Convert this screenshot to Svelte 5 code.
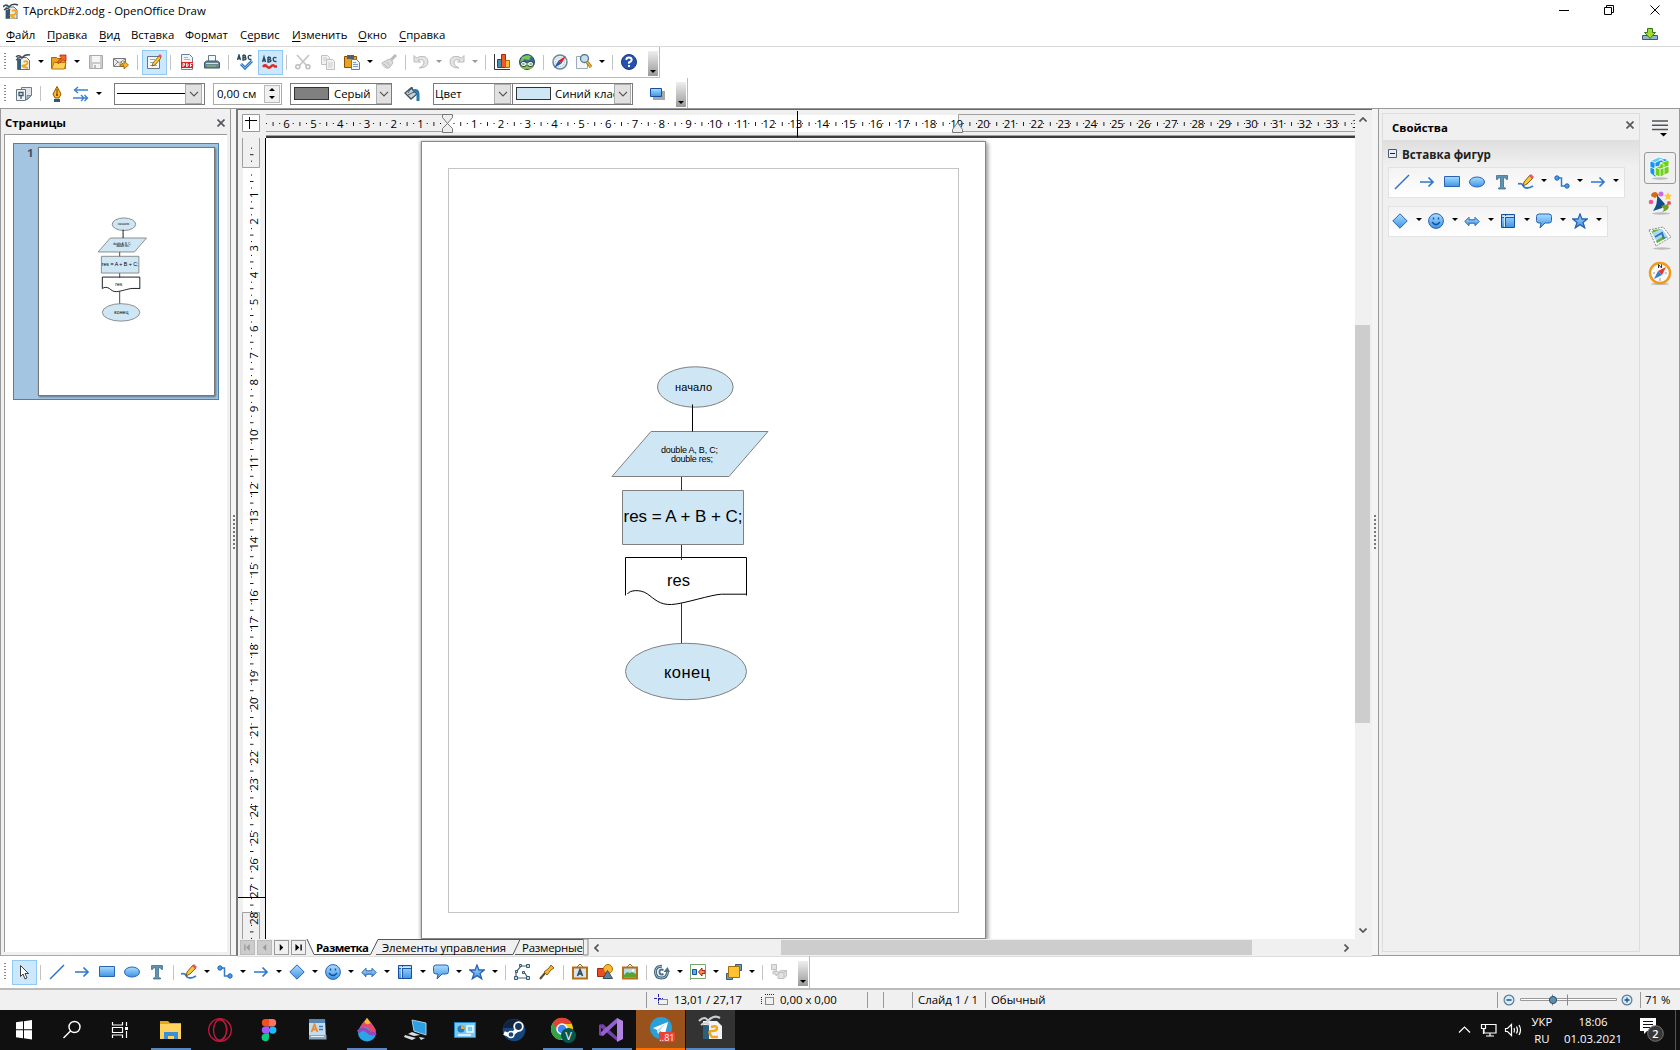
<script>
  const B = 'fill="url(#blue)" stroke="#2a62b4"';
  const icons = {
    app: '<path d="M3 4h8l3 3v9H3z" fill="#e9edf2" stroke="#5f7488"/><path d="M3 7h4v8.500H3z" fill="#33556e"/><path d="M0 4q3-4 6 0q3-4 9-2M1 7q3-3 6 0" fill="none" stroke="#3b4650" stroke-width="1.5"/><path d="M9 8q4-2 4 1t-4 3t3 3" fill="none" stroke="#f0a91c" stroke-width="2"/>',
    fresh: '<path d="M2.500 3.500h9l3 3v9h-12z" fill="#eef1f4" stroke="#55707f"/><path d="M3 6h3v9.500H3z" fill="#2f607c"/><path d="M1 3q3-3 6 1q3-4 8-3M1 6q3-2 5 0" fill="none" stroke="#424b52" stroke-width="1.400"/><path d="M8.500 8q4-2 4 .5t-4 3 4.500 2.500" fill="none" stroke="#eda51c" stroke-width="1.800"/>',
    open: '<path d="M.5 3.500h5l1 1h8v10H.5z" fill="#e8a31f" stroke="#a8620c"/><path d="M3 8.500h12l-1.500 6.500H.8z" fill="#ffd255" stroke="#b87612"/><path d="M6 8.500l4.500-4.500L9 2.500V1h6v6h-1.500L12 5.500 8 9.500z" fill="#f26a26" stroke="#9e2e0c" stroke-width=".8"/>',
    save: '<path d="M1.500 1.500h13v13h-13z" fill="#ccc" stroke="#aaa"/><path d="M4 2h8v6H4zM5 10h7v4H5z" fill="#f5f5f5"/><path d="M6 11h2v3H6z" fill="#bbb"/>',
    mail: '<path d="M.5 4.500h12v8H.5z" fill="#eee" stroke="#777"/><path d="M1 5l5.500 4L12 5M1 12l4-4M12 12L8 8" fill="none" stroke="#888"/><path d="M7 10h4V7l4.500 4-4.500 4v-3H7z" fill="#f7b52a" stroke="#9b6008" stroke-width=".8"/>',
    edit: '<path d="M1.500 2.500h12v12h-12z" fill="#f6f8fa" stroke="#657684"/><path d="M4 5.500h5M4 8.500h3M4 11.500h7" stroke="#9ba8b2"/><path d="M7 9l6-7 2 2-6 7-3 1z" fill="#ffc72e" stroke="#705316" stroke-width=".8"/><path d="M12 2l2-2 2 2-1 2z" fill="#e4576b"/>',
    pdf: '<path d="M2.500.5h8l3 3v12h-11z" fill="#eff3f8" stroke="#6e8194"/><path d="M5 3.500h4M5 5.500h6" stroke="#a8b5c2"/><path d="M2 8h12v6H2z" fill="#df2020"/><path d="M4 13V9.500h1.500v1.800H4M7.500 9.500V12.500q1.800 0 1.800-1.500T7.500 9.500M11.500 13V9.500h2M11.500 11.500h1.500" stroke="#fff" fill="none" stroke-width=".9"/>',
    print: '<path d="M4.500 1.500h7v7h-7z" fill="#f4fafc" stroke="#677c87"/><path d="M.5 8.500l2-1.500h11l2 1.500v5.500H.5z" fill="#6b8694" stroke="#3f5460"/><path d="M2 9.500h12" stroke="#d5e1e7"/><path d="M3 12h9" stroke="#87cf4c"/>',
    spell: '<path d="M.5 6L2 1l1.500 5M1 4.500h2M6 1v5q3 .2 3-1.500 0-1-3-1 2.500 0 2.500-1.200Q8.500 1 6 1M14.500 2Q12 .5 11.300 2.500q-.4 3.500 3.200 3" fill="none" stroke="#2f4a5d" stroke-width="1.400"/><path d="M4 10l4 4 7-7" fill="none" stroke="#2f78c4" stroke-width="3"/><path d="M4 10l4 4 7-7" fill="none" stroke="#7cbcf1"/>',
    spellauto: '<path d="M.5 8L2 3l1.500 5M1 6.500h2M6 3v5q3 .2 3-1.500 0-1-3-1 2.500 0 2.500-1.200Q8.500 3 6 3M14.500 4Q12 2.500 11.300 4.500q-.4 3.500 3.200 3" fill="none" stroke="#2f4a5d" stroke-width="1.400"/><path d="M1 13q2-3 4-.5t4 0t4 0l2 0" fill="none" stroke="#dc2c24" stroke-width="2.600"/>',
    cut: '<path d="M2 1l10 11M14 1L4 12" stroke="#c5c5c5" stroke-width="1.700"/><g fill="none" stroke="#bcbcbc" stroke-width="1.500"><circle cx="2.800" cy="12.700" r="2"/><circle cx="13" cy="12.700" r="2"/></g>',
    copy: '<g fill="#f1f1f1" stroke="#c1c1c1"><path d="M1.500 1.500h6l2 2v7h-8z"/><path d="M6.500 5.500h6l2 2v8h-8z"/></g><path d="M3 4h4M3 6h3M8 9h5M8 11h5M8 13h4" stroke="#ccc"/>',
    paste: '<path d="M.5 2.500h12v11H.5z" fill="#e8a31f" stroke="#8a4f0b"/><path d="M3 1h7v4H3z" fill="#4d626e"/><path d="M7.500 5.500h5l3 3v7h-8z" fill="#eef5fc" stroke="#5d7fa3"/><path d="M9 8.500h3M9 10.500h5M9 12.500h5" stroke="#7d9fc4"/>',
    brush: '<path d="M10 6l5-5" stroke="#bbb" stroke-width="3"/><path d="M1 9l5-3 4-1 2 4-4 5q-5 1-7-5z" fill="#ddd" stroke="#bbb"/><path d="M3 10l4 4M5.500 8l4 4" stroke="#bbb"/>',
    undo: '<path d="M1 1.500V8h6.500L5 6q6-1.500 6 3 0 3-5 5 9 0 9-6 0-6.500-8-5.500L3.500 4z" fill="#e3e3e3" stroke="#bdbdbd"/>',
    redo: '<path d="M15 1.500V8H8.500L11 6Q5 4.500 5 9q0 3 5 5-9 0-9-6 0-6.500 8-5.500L12.500 4z" fill="#e3e3e3" stroke="#bdbdbd"/>',
    chart: '<path d="M.5 0v15.500H16" fill="none" stroke="#333"/><path d="M3.500 5.500h4v8h-4z" fill="#4b8ba9" stroke="#245067"/><path d="M7.500.5h4v13h-4z" fill="#f05a28" stroke="#a42708"/><path d="M11.500 6.500h4v7h-4z" fill="#f8bd3a" stroke="#a76800"/>',
    globe: '<circle cx="8" cy="8" r="7.500" fill="#376d92" stroke="#234b69"/><path d="M3 3q5-3 9-1l-2 4-5-1-2 4-2-1z" fill="#7ac55c"/><path d="M1.500 9h13v4l-3 2h-7l-3-2z" fill="#80bf55"/><g fill="#80bf55" stroke="#39444c" stroke-width="1"><rect x="1.500" y="7.500" width="6" height="5" rx="2.500"/><rect x="8.500" y="7.500" width="6" height="5" rx="2.500"/></g><g fill="none" stroke="#eef"><rect x="2.500" y="8.500" width="4" height="3" rx="1.500"/><rect x="9.500" y="8.500" width="4" height="3" rx="1.500"/><path d="M5 10h6"/></g>',
    compass: '<circle cx="8" cy="8" r="7" fill="#e8f1f6" stroke="#6b8795" stroke-width="1.500"/><circle cx="8" cy="8" r="4.500" fill="none" stroke="#a4bac5" stroke-dasharray="1 1"/><path d="M6.500 6.500L14 2 9.500 9.500z" fill="#e6202a"/><path d="M6.500 6.500L2 14l7.500-4.500z" fill="#245ea9"/>',
    find: '<path d="M.5 2.500h11v12H.5z" fill="#f4f7fa" stroke="#9daab5"/><circle cx="8.500" cy="4.500" r="4" fill="#c2dff0" stroke="#597487" stroke-width="1.300"/><path d="M11 8l4 5" stroke="#9b640c" stroke-width="3"/><path d="M11 8l4 5" stroke="#f3b936" stroke-width="1.500"/>',
    help: '<circle cx="8" cy="8" r="7.500" fill="#2550ad" stroke="#193980"/><path d="M5.300 6q0-2.500 2.700-2.500T10.700 6Q10.500 7.500 8 8.500v1.200M8 11v2" fill="none" stroke="#fff" stroke-width="1.900"/>',
    styles: '<path d="M5.500 1.500h10v8l-4 4h-6z" fill="#dfe7ec" stroke="#6b7c87"/><path d="M15 9.500l-4 4v-4z" fill="#a8c9db" stroke="#657986" stroke-width=".8"/><path d="M.5 3.500h9v11h-9z" fill="#eff3f6" stroke="#657986"/><path d="M3 6.500h4v3H3zM5 9.500V13" fill="none" stroke="#425765" stroke-width="1.300"/>',
    pen: '<path d="M8 .5L4 8l2 4h4l2-4z" fill="#f9bd2c" stroke="#935207"/><path d="M8 3v6" stroke="#6b3a08"/><circle cx="8" cy="9" r="1" fill="#6b3a08"/><path d="M5 13h6v3H5z" fill="#29597d"/>',
    lineends: '<path d="M1.500 4H15M5 1L1.500 4 5 7M0 12h14M8 9l3 3-3 3M11.500 9l3 3-3 3" fill="none" stroke="#3b82d3" stroke-width="1.400"/>',
    bucket: '<path d="M1 7l6-5 6 6-6 5z" fill="#c7d1d8" stroke="#45535e" stroke-width="1.300"/><path d="M4 7l4-6 2 6M4 9l6-3" fill="none" stroke="#45535e"/><path d="M9 5q5-2 5 3v7" fill="none" stroke="#2779b5" stroke-width="3"/>',
    shadow: '<path d="M4 5h12v9H4z" fill="#a7a7a7"/><path d="M1.500 2.500h11v8h-11z" fill="url(#blue)" stroke="#174f9f"/>',
    cursor: '<path d="M4.500 1.500v11l2.500-2.500 2 5 2-1-2-4.500h3.500z" fill="#fff" stroke="#3c3c3c"/>',
    line: '<path d="M1 15L15 1" stroke="#2a70c8" stroke-width="1.500"/>',
    arrow: '<path d="M1 8h13M9.500 3.500L14 8l-4.500 4.500" fill="none" stroke="#2d78d0" stroke-width="1.700"/>',
    rect: `<path d="M.5 2.500h15v10H.5z" ${B}/>`,
    ellipse: `<ellipse cx="8" cy="8" rx="7.500" ry="5" ${B}/>`,
    text: '<path d="M2.500 1.500h11v4h-1q-.5-2-3-2v9.500q0 1 2 1v1h-7v-1q2 0 2-1V3.500q-2.500 0-3 2h-1z" fill="#5f93b4" stroke="#35637f" stroke-width=".7"/>',
    pencil: '<path d="M0 10q4-1 5 1.500t4 2.500 6-2" fill="none" stroke="#347bd0" stroke-width="1.800"/><path d="M6 8l6-7 3 3-6 6-4 2z" fill="#ffc72e" stroke="#6e4e18" stroke-width=".9"/><path d="M11 2l2-2 3 3-2 2z" fill="#e4596a"/>',
    connector: '<path d="M3 4h4.500v8H13" fill="none" stroke="#347bd0" stroke-width="1.500"/><circle cx="3" cy="4" r="2.200" fill="#4b9ae9" stroke="#2263b9"/><circle cx="13" cy="12" r="2.200" fill="#4b9ae9" stroke="#2263b9"/>',
    diamond: `<path d="M8 .8L15.200 8 8 15.200.8 8z" ${B}/>`,
    smile: `<circle cx="8" cy="8" r="7.400" ${B}/><path d="M4 9q4 5 8 0M5.500 4.500v2M10.500 4.500v2" fill="none" stroke="#174f9f" stroke-width="1.400"/>`,
    both: `<path d="M.8 8.500L5 4.300v2.500h6V4.300l4.200 4.200-4.200 4.200v-2.500H5v2.500z" ${B}/>`,
    flow: `<path d="M1.500 1.500h13v13h-13z" fill="url(#blue)" stroke="#174f9f"/><path d="M2 4.500h12M5.500 2v12" stroke="#2357a5"/><path d="M2 3.500h12M4.500 2v12" stroke="#c9e8ff"/>`,
    callout: `<path d="M3 1h10q2.500 0 2.500 2.500v4Q15.500 10 13 10H9l-5 5 1-5H3Q.5 10 .5 7.500v-4Q.5 1 3 1z" ${B}/>`,
    star: `<path d="M8 1l1.900 5h5.300l-4.200 3.500 1.700 5.300L8 11.600l-4.700 3.200L5 9.500.8 6h5.300z" ${B} stroke-width="1.300"/>`,
    points: '<path d="M14 2H7L2 8v6h12l-4-6" fill="none" stroke="#45647a" stroke-width="1.200"/><g fill="#b6daf2" stroke="#375a76"><path d="M5.500.5h2v2h-2zM.5 12.500h3v3h-3zM12.500 12.500h3v3h-3zM12.500.5h3v3h-3zM1.500 6.500h2v2h-2zM8.500 7.500h2v2h-2z"/></g>',
    gluepoint: '<path d="M1 15l5-6" stroke="#56483d" stroke-width="2"/><path d="M5 8l5-4 2-3 3 3-3 2-4 5z" fill="#f3b32f" stroke="#91600c"/>',
    fontwork: '<path d="M5 3l3-3 3 3" fill="none" stroke="#8b6730"/><path d="M1 3.500h14v11H1z" fill="#d9e5ed" stroke="#b86f13" stroke-width="2"/><path d="M5.500 12L8 5.500l2.500 6.500M6.500 9.800h3" fill="none" stroke="#344b5b" stroke-width="1.700"/>',
    gallery: '<path d="M.5 4.500h8v8h-8z" fill="#e94d20" stroke="#9e2b0b"/><circle cx="11" cy="5" r="4.500" fill="#f9b730" stroke="#ae6e0b"/><path d="M6 14.500l4.500-8 5 8z" fill="#5f8298" stroke="#2f4d61"/>',
    picture: '<path d="M5 3l3-3 3 3" fill="none" stroke="#8b6730"/><path d="M1 3.500h14v11H1z" fill="#b2dcf5" stroke="#b86f13" stroke-width="2"/><path d="M2 11l3-3 3 1 2-1 4 2v3.500H2z" fill="#57a52f"/><circle cx="11" cy="6.500" r="1.200" fill="#fff"/>',
    rotate: '<path d="M8 2.200Q1.500 2 1.500 8t6 6q5.500 0 6-6" fill="none" stroke="#3f647b" stroke-width="3"/><path d="M8 2.200Q1.500 2 1.500 8t6 6q5.500 0 6-6" fill="none" stroke="#9cc0d6"/><path d="M9.500 6Q5 4.500 5.500 8.500q.5 3 4 1.500" fill="none" stroke="#4d7188" stroke-width="2"/><path d="M9.500 8l4-5 2.500 5z" fill="#4d7188"/>',
    align: '<path d="M.5 0v16M.5.500h15v14H.5" fill="none" stroke="#77a96d"/><path d="M2.500 5.500h4v5h-4z" fill="#58adeb" stroke="#174f9f"/><path d="M15 6.500h-3V4L8.500 8l3.500 4V9.500h3z" fill="#f48d5e" stroke="#a42809"/>',
    arrange: '<path d="M9.500.5h6v6h-6z" fill="#6e9cbd" stroke="#335a78"/><path d="M.5 9.500h6v6h-6z" fill="#6e9cbd" stroke="#335a78"/><path d="M2.500 2.500h11v11h-11z" fill="#ffc332" stroke="#a46b0b"/>',
    extrude: '<g fill="#e2e2e2" stroke="#c0c0c0"><path d="M.5.5h5v5h-5zM7 8.500l3-2h5.500V12L13 14.500H7zM7 8.500h6V14M13 8.500l2.500-2"/><path d="M2 7v3h3v2l3-3-3-3v2H4V7z"/></g>',
  };
  const T = (icon, o = {}) => ({ icon, ...o });
  const SEP = { sep: true };
  const standard = [T('fresh', { drop: 1 }), T('open', { drop: 1 }), T('save'), T('mail'), SEP, T('edit', { on: 1 }), SEP, T('pdf'), T('print'), SEP, T('spell'), T('spellauto', { on: 1 }), SEP, T('cut'), T('copy'), T('paste', { drop: 1 }), T('brush'), SEP, T('undo', { drop: 1, off: 1 }), T('redo', { drop: 1, off: 1 }), SEP, T('chart'), T('globe'), SEP, T('compass'), T('find', { drop: 1 }), SEP, T('help')];
  const basic = ['line', 'arrow', 'rect', 'ellipse', 'text'].map((n) => T(n));
  const lines = ['pencil', 'connector', 'arrow'].map((n) => T(n, { drop: 1 }));
  const shapes = ['diamond', 'smile', 'both', 'flow', 'callout', 'star'].map((n) => T(n, { drop: 1 }));
  const drawing = [T('cursor', { on: 1 }), SEP, ...basic, SEP, ...lines, ...shapes, SEP, T('points'), T('gluepoint'), SEP, T('fontwork'), T('gallery'), T('picture'), SEP, T('rotate', { drop: 1 }), T('align', { drop: 1 }), T('arrange', { drop: 1 }), SEP, T('extrude')];
  const menus = [['', 'Ф', 'айл'], ['', 'П', 'равка'], ['', 'В', 'ид'], ['Вст', 'а', 'вка'], ['Фо', 'р', 'мат'], ['С', 'е', 'рвис'], ['', 'И', 'зменить'], ['', 'О', 'кно'], ['', 'С', 'правка']];
  const CM = 26.8;
  const hMarks = Array.from({ length: 42 }, (_, i) => i - 7);
  const vMarks = Array.from({ length: 30 }, (_, i) => i - 1);

  const tasks = {
    start: '<path d="M6 6.300l7-1v8H6zM14 5.200l8-1.200v9.300h-8zM6 14.200h7v8l-7-1zM14 14.200h8v9.300l-8-1.200z" fill="#fff"/>',
    search: '<circle cx="16.500" cy="11" r="5.500" fill="none" stroke="#fff" stroke-width="1.400"/><path d="M12.500 15l-7 7" stroke="#fff" stroke-width="1.400"/>',
    view: '<path d="M6.500 6v3h10V6M6.500 22v-3h10v3M6.500 11.500h10v5h-10zM20.500 6v4M20.500 15v7" fill="none" stroke="#fff" stroke-width="1.200"/><path d="M19 11h3v3h-3z" fill="#fff"/>',
    explorer: '<path d="M3 5h8l2 2h11v16H3z" fill="#e5a714"/><path d="M3 8h21v15H3z" fill="#ffd35d"/><path d="M7 23v-7h14v7h-4v-3h-6v3z" fill="#3a8fd9"/>',
    opera: '<circle cx="14" cy="14" r="11.300" fill="none" stroke="#c4183f" stroke-width="1.300"/><ellipse cx="14" cy="14" rx="6.500" ry="10.500" fill="none" stroke="#c4183f" stroke-width="1.300"/><path d="M12 3q10 3 9 11t-9 11" fill="none" stroke="#c4183f"/>',
    figma: '<path d="M14 3h-3.500a3.700 3.700 0 000 7.400H14z" fill="#f24e1e"/><path d="M14 3h3.500a3.700 3.700 0 010 7.400H14z" fill="#ff7262"/><path d="M14 10.400h-3.500a3.700 3.700 0 000 7.400H14z" fill="#a259ff"/><circle cx="17.700" cy="14.100" r="3.700" fill="#1abcfe"/><path d="M14 17.800h-3.500a3.700 3.700 0 103.500 3.700z" fill="#0acf83"/>',
    word: '<path d="M5 3h16l1 20H5z" fill="#c3dcf0"/><path d="M5 3h16v4H5z" fill="#5289b9"/><path d="M7.500 16l3-7.500 3 7.500M8.500 13.500h4" fill="none" stroke="#f08a24" stroke-width="1.800"/><path d="M15 10.500h4M15 13.500h4" stroke="#357cc0" stroke-width="1.500"/><path d="M5 19h17.500v4.500H5z" fill="#8aa7bd"/><path d="M7 20.500h13" stroke="#e8f2fa"/>',
    flame: '<path d="M14 2q9 10 9 15a9 8.500 0 01-18 0Q5 12 14 2z" fill="#28a7e8"/><path d="M14 2q-5 5-8 11 7-5 10 0t7 2Q22 11 14 2z" fill="#e8476c"/><path d="M5 16q5-5 9-1t9 2" fill="none" stroke="#9548bd" stroke-width="3.500"/><path d="M14 2l3.500 5q-4 3-6-1z" fill="#ffc21a"/>',
    remote: '<path d="M10 4l14 3v12l-12-4z" fill="#2c9fe5" stroke="#a4cee8"/><path d="M10 16l8 3-6 1-6-2zM3 19l11 3-4 2-8-3zM17 21l6 1-4 2z" fill="#d8dde1"/>',
    system: '<path d="M3.500 6.500h21v15h-21z" fill="#79c8f4" stroke="#2287c8"/><circle cx="10" cy="13" r="3.500" fill="#257cb6"/><path d="M10 13V9.500A3.500 3.500 0 0113.500 13z" fill="#f2a62b"/><path d="M16 10h6v6h-6zM7 19h13" fill="none" stroke="#eefaff" stroke-width="1.500"/>',
    steam: '<circle cx="14" cy="14" r="11.300" fill="#17467c"/><path d="M3 12a11.300 11.300 0 0122 0z" fill="#11233f"/><path d="M4 17l6 2.500 8-6" fill="none" stroke="#fff" stroke-width="4"/><circle cx="18.500" cy="10.500" r="4.300" fill="#17355f" stroke="#fff" stroke-width="1.800"/><circle cx="11" cy="18.500" r="3" fill="#17467c" stroke="#fff" stroke-width="1.300"/>',
    chrome: '<circle cx="13" cy="13" r="11" fill="#f8c61b"/><path d="M3.500 7.500A11 11 0 0123 8H13l-4.500 7.500z" fill="#e24134"/><path d="M3.500 7.500A11 11 0 0012 24l5-9H9z" fill="#31a350"/><circle cx="13" cy="13" r="5" fill="#4285f4" stroke="#fff" stroke-width="1.500"/><circle cx="19.500" cy="19.500" r="7.500" fill="#06574a"/><text x="19.500" y="23.500" text-anchor="middle" font-size="11" fill="#fff">V</text>',
    vs: '<path d="M2 9l3-1 14 13 0 4L2 11z" fill="#7641ad"/><path d="M2 19l3 1L19 7V2L2 17z" fill="#9462d0"/><path d="M1 9l2-1v12l-2-1z" fill="#7641ad"/><path d="M19 2l6 3v18l-6 3z" fill="#b184e4"/>',
    telegram: '<circle cx="14" cy="13" r="11" fill="#28a0da"/><path d="M6 13l15-6-3 12-5-3-2 3-1-4z" fill="#fff"/><path d="M10 15l8-6-6 8" fill="#b9ddf0"/><rect x="12" y="17" width="16" height="10" rx="2" fill="#ee4036"/><text x="20" y="25.500" text-anchor="middle" font-size="9" fill="#fff">..81</text>',
    draw: '<path d="M6 6h14l5 5v13H6z" fill="#f2f4f6"/><path d="M6 10h6v14H6z" fill="#2d5f7c"/><path d="M2 6q6-6 9 0 6-7 12-3M4 10q5-4 8 0" fill="none" stroke="#c9d0d4" stroke-width="2.200"/><path d="M14 12q6-2 6 1t-5 3 0 6h6" fill="none" stroke="#f1a81e" stroke-width="2.500"/>',
  };
  const taskbar = [['start'], ['search'], ['view'], ['explorer', 'run'], ['opera'], ['figma'], ['word'], ['flame', 'run'], ['remote'], ['system'], ['steam'], ['chrome', 'run'], ['vs', 'run'], ['telegram', 'alert'], ['draw', 'active']];
</script>

{#snippet ico(name)}
  <svg class="ico" viewBox="0 0 16 16">{@html icons[name]}</svg>
{/snippet}

{#snippet tools(list)}
  {#each list as t}
    {#if t.sep}
      <i class="sep"></i>
    {:else}
      <span class="tool" class:on={t.on} class:menued={t.drop}>{@render ico(t.icon)}</span>
      {#if t.drop}<span class="drop" class:off={t.off}></span>{/if}
    {/if}
  {/each}
{/snippet}

{#snippet chevron()}
  <span class="chev"><svg viewBox="0 0 10 6"><path d="M1 .8l4 4 4-4" fill="none" stroke="#555" stroke-width="1.200" /></svg></span>
{/snippet}

{#snippet diagram()}
  <svg class="diagram" viewBox="422 141 563 797" font-family="Liberation Sans, Arial, sans-serif">
    <g fill="#cfe7f5" stroke="#808080">
      <ellipse cx="695.300" cy="387" rx="37.800" ry="20.200" />
      <path d="M651 431.500h117l-39 45H612z" />
      <path d="M622.500 490.500h121v54h-121z" />
      <ellipse cx="686" cy="671.500" rx="60.500" ry="28.200" />
    </g>
    <g fill="none" stroke="#000">
      <path d="M692.500 404.500v27" />
      <path d="M625.500 595.500v-38h121v38M627.500 594c2-4 13-5 20 0s12 11 24 10.500 40-10 50-10.300h25" />
      <path d="M681.500 477v13.500M681.500 545v15M681.500 603v40" stroke="#333" />
    </g>
    <g class="labels" fill="#000">
      <text x="675" y="391" font-size="11" textLength="37">начало</text>
      <text x="661" y="453" font-size="9" textLength="57">double A, B, C;</text>
      <text x="671" y="462" font-size="9" textLength="42">double res;</text>
      <text x="623.500" y="521.500" font-size="17" textLength="119">res = A + B + C;</text>
      <text x="667" y="586" font-size="16.500" textLength="23">res</text>
      <text x="664" y="678" font-size="16.500" textLength="46">конец</text>
    </g>
  </svg>
{/snippet}

<svg width="0" height="0" class="defs">
  <defs>
    <linearGradient id="blue" x1="0" y1="0" x2="0" y2="1">
      <stop offset="0" stop-color="#a9dcff" />
      <stop offset="1" stop-color="#3f94e4" />
    </linearGradient>
  </defs>
</svg>

<div class="window">
  <header class="title">
    {@render ico('app')}
    <span class="name">TAprckD#2.odg - OpenOffice Draw</span>
    <svg class="winbtns" viewBox="0 0 110 12"><path d="M0 6.500h10M45.500 3.500h7v7h-7zM47.500 3.500v-2h7v7h-2M91.500 1.500l9 9M100.500 1.500l-9 9" fill="none" stroke="#000" /></svg>
  </header>
  <nav class="menu">
    {#each menus as [a, u, b]}<span>{a}<u>{u}</u>{b}</span>{/each}
    <svg class="update" viewBox="0 0 16 13"><path d="M.5 7.500h15v4H.5z" fill="#8fb7cf" stroke="#3a5a70" /><path d="M5.500.5h5v4h3L8 10.500 2.500 4.500h3z" fill="#a6d829" stroke="#2d7d14" /></svg>
  </nav>

  <div class="bar std"><i class="grip"></i>{@render tools(standard)}<b class="more"></b></div>

  <div class="bar fmt">
    <i class="grip"></i>
    {@render tools([T('styles'), SEP, T('pen'), T('lineends', { drop: 1 })])}
    <div class="combo ln"><i class="stroke"></i>{@render chevron()}</div>
    <div class="combo num"><span>0,00 см</span><i class="spin"><em class="up"></em><em class="dn"></em></i></div>
    <div class="combo col"><i class="swatch grey"></i><span>Серый</span>{@render chevron()}</div>
    {@render tools([T('bucket', { drop: 0 })])}
    <div class="combo kind"><span>Цвет</span>{@render chevron()}</div>
    <div class="combo fill"><i class="swatch"></i><span>Синий клас</span>{@render chevron()}</div>
    {@render tools([T('shadow')])}
    <b class="more"></b>
  </div>

  <main>
    <aside class="pages">
      <div class="phead"><b>Страницы</b><svg viewBox="0 0 8 8"><path d="M.5.5l7 7M7.500.5l-7 7" stroke="#54585e" stroke-width="1.700" /></svg></div>
      <div class="plist"><div class="thumb"><b>1</b><div class="mini">{@render diagram()}</div></div></div>
    </aside>
    <div class="split"><i></i></div>

    <section class="work">
      <div class="corner"><svg viewBox="0 0 18 18"><path d="M.5.5h17v17H.5z" fill="#fff" stroke="#999" /><path d="M3 6.500h12M7.500 3v12" stroke="#000" /></svg></div>
      <svg class="hruler" viewBox="266 110 1089 28">
        <rect x="266" y="110" width="1089" height="28" fill="#f0f0f0" />
        <rect x="447" y="115" width="511" height="17" fill="#fff" />
        <path d="M260 114.500H447.500V131.500H260M1356 114.500H958.500V131.500H1356" fill="none" stroke="#a0a0a0" />
        <path d="M260 135.500h1100" stroke="#a0a0a0" /><path d="M260 137h1100" stroke="#000" stroke-width="1.600" />
        {#each hMarks as n}
          {@const x = 447.3 + n * CM}
          {#if n !== 0 && n > -7}<text {x} y="127.500" text-anchor="middle">{Math.abs(n)}</text>{/if}
          <path d="M{x + 6.200} 123.500h1M{x + 19.500} 123.500h1" stroke="#000" />
          <path d="M{x + 13.400} 122v4" stroke="#222" />
        {/each}
        <path d="M797.500 111v26" stroke="#000" />
        <g fill="#eee" stroke="#777"><path d="M442.500 114.500h10v3l-5 6-5-6zM442.500 132.500h10v-4l-5-5-5 5zM952.500 132.500h10v-3l-5-7-5 7z" /></g>
      </svg>
      <svg class="vruler" viewBox="238 138 28 801">
        <rect x="238" y="138" width="28" height="801" fill="#f0f0f0" />
        <rect x="243" y="168" width="17" height="744" fill="#fff" />
        <path d="M242.500 137V167.500H259.500V137M242.500 940V912.500H259.500V940" fill="none" stroke="#a0a0a0" />
        <path d="M265.500 137v810" stroke="#000" />
        {#each vMarks as n}
          {@const y = 168 + n * CM}
          {#if n > 0}<text transform="translate(257.800 {y}) rotate(-90)" text-anchor="middle">{n}</text>{/if}
          <path d="M251 {y + 7}h1M251 {y + 20}h1" stroke="#000" />
          <path d="M250 {y + 13.5}h3.500" stroke="#222" />
        {/each}
        <path d="M238 897.500h28" stroke="#000" />
      </svg>
      <div class="canvas"><div class="page">{@render diagram()}</div></div>
      <div class="vscroll">
        <svg viewBox="0 0 8 5"><path d="M.5 4.500L4 1l3.500 3.500" fill="none" stroke="#555" stroke-width="1.700" /></svg>
        <i></i>
        <svg viewBox="0 0 8 5"><path d="M.5.5L4 4 7.500.5" fill="none" stroke="#555" stroke-width="1.700" /></svg>
      </div>
      <div class="bottom">
        <div class="navs">
          <svg class="dis" viewBox="0 0 15 15"><path d="M4.500 4v7" stroke="#999" stroke-width="1.500" /><path d="M10 3.500v8l-4-4z" fill="#999" /></svg>
          <svg class="dis" viewBox="0 0 15 15"><path d="M9.500 3.500v8l-4-4z" fill="#999" /></svg>
          <svg viewBox="0 0 15 15"><path d="M5.500 3.500v8l4-4z" fill="#000" /></svg>
          <svg viewBox="0 0 15 15"><path d="M4 3.500v8l4.500-4z" fill="#000" /><path d="M10.500 4v7" stroke="#000" stroke-width="1.600" /></svg>
        </div>
        <svg class="tabs" viewBox="306 939 284 17">
          <path d="M306 939h284v17H306z" fill="#f0f0f0" />
          <path d="M307 939l7 15.500h56L378 939z" fill="#fff" />
          <path d="M307 939l7 15.500h56.500l7.500-15H588" fill="none" stroke="#555" />
          <path d="M376 954.500h137l7-15M515 954.500h73" fill="none" stroke="#555" />
          <text x="316" y="952" font-weight="700" textLength="53">Разметка</text>
          <text x="382" y="952" textLength="124">Элементы управления</text>
          <text x="522" y="952" textLength="61">Размерные</text>
          <path d="M583.500 939v16h4.500v-16z" fill="#f0f0f0" stroke="#888" />
        </svg>
        <div class="hscroll">
          <svg viewBox="0 0 5 8"><path d="M4.500.5L1 4l3.500 3.500" fill="none" stroke="#555" stroke-width="1.700" /></svg>
          <i></i>
          <svg viewBox="0 0 5 8"><path d="M.5.5L4 4 .5 7.500" fill="none" stroke="#555" stroke-width="1.700" /></svg>
        </div>
      </div>
    </section>
    <div class="split right"><i></i></div>

    <aside class="props">
      <div class="deck">
        <div class="dhead"><b>Свойства</b><svg viewBox="0 0 8 8"><path d="M.5.5l7 7M7.500.5l-7 7" stroke="#54585e" stroke-width="1.700" /></svg></div>
        <div class="dsub"><svg viewBox="0 0 9 9"><path d="M.5.5h8v8h-8z" fill="#e7eef5" stroke="#4c5c6c" /><path d="M2 4.500h5" stroke="#222" /></svg><b>Вставка фигур</b></div>
        <div class="set first">{@render tools([...basic, ...lines])}</div>
        <div class="set second">{@render tools(shapes)}</div>
      </div>
      <div class="dtabs">
        <svg class="burger" viewBox="0 0 18 18"><path d="M1 2h16M1 6.300h16M1 10.500h16" stroke="#4c555e" stroke-width="1.500" /><path d="M9 14h7l-3.500 3.500z" fill="#000" /></svg>
        <span class="dtab sel"><svg viewBox="0 0 24 24"><ellipse cx="12" cy="22.500" rx="8" ry="1.200" fill="#bbb" /><g stroke="#fff" stroke-width=".8"><path d="M2 5l9-4 10 3v5l-10 2v9l-4 1-5-4z" fill="#1695ee" /><path d="M2 5l9-4 5 1.500-9 4z" fill="#68c9ff" /><path d="M12 7l9-3v13l-9 4-5-2v-8l5-1z" fill="#70cf1d" /><path d="M7 11l5 2 9-3M12 13v8M12 7l4 1.500V20M7 6.500V19M2 11l5 2M11 3l5 2" fill="none" /></g></svg></span>
        <span class="dtab"><svg viewBox="0 0 24 24"><ellipse cx="13" cy="22.500" rx="9" ry="1.200" fill="#bbb" /><path d="M3 5q0-4 5-4l3 3-4 3z" fill="#d66a16" /><path d="M9 4l8 9-3 4-9 3q5-7 4-16z" fill="#124f88" /><path d="M13 15l7-2q3 6-6 8 4-3-1-6z" fill="#71a02a" /><g fill="#ef5a8e"><circle cx="3" cy="11" r="2.300" /><circle cx="13" cy="3" r="2.500" fill="#c96be8" /><circle cx="21" cy="12" r="2" fill="#ee5548" /></g><path d="M20 1l1 2.500 3 .5-2 2 .5 3L20 7.500 17.500 9l.5-3-2-2 3-.5z" fill="#ffc936" /></svg></span>
        <span class="dtab"><svg viewBox="0 0 24 24"><ellipse cx="14" cy="22.500" rx="9" ry="1.200" fill="#bbb" /><path d="M1 4l14-3 8 10-15 9z" fill="#fff" stroke="#888" stroke-dasharray="2 1" /><path d="M3 5l11-2 6 8-11 6z" fill="#a9daf3" /><path d="M4 7l9-4-8 1zM8 15l6-4 6 0-11 6z" fill="#6bb32c" /><path d="M7 11l7-4 2 6" fill="none" stroke="#3675bb" stroke-width="2" /></svg></span>
        <span class="dtab"><svg viewBox="0 0 24 24"><ellipse cx="12" cy="23" rx="9" ry="1" fill="#bbb" /><circle cx="12" cy="12" r="10" fill="#fafafa" stroke="#f09a1a" stroke-width="2.400" /><path d="M12 17v3M5 12h2M17 12h2" stroke="#999" /><path d="M10 10l8-4-4 8z" fill="#e03a31" /><path d="M10 10l4 4-8 4z" fill="#347ed1" /><path d="M10.500 7V3.500l3 3.500V3.500" fill="none" stroke="#333" /></svg></span>
      </div>
    </aside>
  </main>

  <div class="bar drw"><i class="grip"></i>{@render tools(drawing)}<b class="more"></b></div>

  <footer class="status">
    <div class="pos"><svg viewBox="0 0 14 12"><path d="M4.500 0v9M0 4.500h9" stroke="#22a" stroke-dasharray="3 1" /><path d="M4.500 5.500h9v5h-9z" fill="none" stroke="#222" stroke-dasharray="1 1" /></svg><span>13,01 / 27,17</span></div>
    <div class="size"><svg viewBox="0 0 15 12"><path d="M5.500 3.500h8v7h-8zM1.500 3v8M5 .5h9" fill="none" stroke="#222" stroke-dasharray="1 1" /></svg><span>0,00 x 0,00</span></div>
    <div class="gap1"></div><div class="gap2"></div>
    <div class="slide">Слайд 1 / 1</div>
    <div class="style">Обычный</div>
    <div class="zoom"><svg viewBox="0 0 134 14"><g fill="#d6eaf8" stroke="#5a7c98" stroke-width="1.200"><circle cx="8" cy="7" r="4.900" /><circle cx="126" cy="7" r="4.900" /></g><path d="M5.500 7h5M123.500 7h5M126 4.500v5" stroke="#16518b" stroke-width="1.300" /><path d="M19.500 5.500h96v2h-96z" fill="#fff" stroke="#999" /><path d="M66.500 1.500v11M51.500 1.500v11" stroke="#888" /><circle cx="52" cy="7" r="3.600" fill="#5c8eae" stroke="#27506d" /></svg></div>
    <div class="pct">71 %</div>
  </footer>

  <div class="taskbar">
    {#each taskbar as [name, state]}
      <span class="task {state ?? ''}"><svg viewBox="0 0 28 28">{@html tasks[name]}</svg></span>
    {/each}
    <div class="tray">
      <svg class="trayicons" viewBox="0 0 66 16"><g fill="none" stroke="#fff" stroke-width="1.200"><path d="M1 10.500l5.500-5.500 5.500 5.500M28 2.500h10v8.500H26V7M32 11v3M28 14h8M23.500 2.500h4v4h-4zM25.500 6v6" /><path d="M47.500 6.500h2l4-4v11l-4-4h-2zM56 6q1 2 0 4.500M58.500 4.500q2 3.500 0 7M61 3q3 5 0 10" /></g></svg>
      <div class="stack lang"><span>УКР</span><span>RU</span></div>
      <div class="stack clock"><span>18:06</span><span>01.03.2021</span></div>
      <svg class="note" viewBox="0 0 26 26"><path d="M1 1h16v13H8l-3 3v-3H1z" fill="#fff" /><path d="M4 4.500h10M4 7.500h10M4 10.500h7" stroke="#101010" /><circle cx="16.500" cy="16.500" r="7.800" fill="#383838" stroke="#777" /><text x="16.500" y="20.500" text-anchor="middle" font-size="11" font-weight="600" fill="#fff">2</text></svg>
      <i class="peek"></i>
    </div>
  </div>
</div>

<style>
  :global(body) { margin: 0; overflow: hidden; }
  .window { width: 1680px; height: 1050px; display: flex; flex-direction: column; background: #fff; color: #000; font: 11.4px/16px 'Open Sans', 'Noto Sans', sans-serif; white-space: nowrap; }
  .window * { box-sizing: border-box; }
  svg { display: block; flex: none; }
  .defs { position: absolute; }
  .ico { width: 16px; height: 16px; }
  .title { height: 24px; display: flex; align-items: center; padding: 0 11px 2px 3px; gap: 4px; }
  .name { flex: 1; }
  .winbtns { width: 110px; height: 12px; margin: -2px 0 0; }
  .menu { height: 23px; display: grid; grid-template-columns: 41px 52px 32px 54px 55px 52px 66px 41px 50px 1fr; align-items: center; padding: 0 22px 1px 6px; border-bottom: 1px solid #d8d8d8; }
  .menu u { text-underline-offset: 2px; }
  .update { width: 16px; height: 13px; justify-self: end; }
  .bar { display: flex; align-items: center; padding-left: 4px; height: 31px; border-right: 1px solid #bbb; border-bottom: 1px solid #bbb; }
  .std { width: 660px; }
  .fmt { width: 688px; border-bottom: 0; }
  .drw { width: 810px; height: 32px; border-bottom: 0; }
  .grip { width: 2px; height: 18px; margin-right: 6px; background: repeating-linear-gradient(#888 0 1px, #fff 1px 3px); flex: none; }
  .tool { width: 25px; height: 25px; display: flex; align-items: center; padding-left: 4px; flex: none; }
  .tool.menued { padding-left: 3px; }
  .tool.on { background: #cce8ff; border: 1px solid #90c8f6; padding-left: 3px; }
  .drop { width: 11px; height: 25px; flex: none; display: flex; align-items: center; padding-left: 1px; }
  .drop::after { content: ''; border: 3px solid transparent; border-top: 3px solid #000; border-bottom: 0; margin-top: -1px; }
  .drop.off::after { border-top-color: #999; }
  .sep { width: 8px; height: 15px; flex: none; background: linear-gradient(#c4c4c4, #c4c4c4) 3px 0 / 1px 15px no-repeat; }
  .more { width: 10px; height: 25px; margin: 2px 1px 0 auto; background: linear-gradient(#eee, #999); display: flex; align-items: flex-end; justify-content: center; padding-bottom: 3px; }
  .more::after { content: ''; border: 3px solid transparent; border-top-color: #000; border-bottom: 0; }
  .combo { height: 22px; border: 1px solid #7a7a7a; background: #fff; display: flex; align-items: center; overflow: hidden; flex: none; }
  .chev { margin: 0 1px 0 auto; width: 17px; height: 20px; background: #e1e1e1; border: 1px solid #adadad; display: grid; place-items: center; flex: none; }
  .chev svg { width: 10px; height: 6px; }
  .ln { width: 91px; margin-left: 8px; }
  .stroke { width: 68px; height: 1px; background: #000; margin-left: 2px; }
  .num { width: 69px; margin-left: 8px; padding-left: 3px; border-color: #aaa; }
  .spin { width: 16px; height: 18px; margin: 0 1px 0 auto; background: #f0f0f0; border: 1px solid #bbb; display: grid; place-items: center; font-style: normal; }
  .up, .dn { border: 3px solid transparent; border-bottom-color: #000; border-top: 0; }
  .dn { border-top: 3px solid #000; border-bottom: 0; }
  .col { width: 102px; margin: 0 8px; gap: 5px; }
  .swatch { width: 35px; height: 13px; border: 1px solid #333; background: #cfe7f5; margin-left: 2px; flex: none; }
  .grey { background: #808080; margin-left: 3px; }
  .ln .chev, .col .chev { margin-right: 2px; }
  .kind { width: 80px; margin-left: 8px; padding-left: 1px; }
  .kind .chev { margin-right: 1px; }
  .fill { width: 120px; gap: 4px; border-left: 0; margin-right: 12px; }
  .fill .swatch { margin-left: 3px; }
  .fill > span:not(.chev) { width: 60px; overflow: hidden; margin-right: -6px; }

  main { height: 848px; margin-top: -1px; display: flex; border-top: 1px solid #999; background: #f0f0f0; }
  .pages { width: 231px; border-right: 1px solid #999; border-bottom: 1px solid #aaa; border-left: 1px solid #999; display: flex; flex-direction: column; }
  .phead { height: 25px; display: flex; align-items: center; justify-content: space-between; padding: 2px 5px 0 4px; }
  .phead svg, .dhead svg { width: 8px; height: 8px; }
  .plist { flex: 1; margin: 0 3px 3px; background: #fff; border-top: 1px solid #999; border-left: 1px solid #999; padding: 8px 0 0 8px; }
  .thumb { width: 206px; height: 257px; background: #a3c5e1; border: 1px solid #4f81a5; display: flex; padding: 3px 0 0 13px; color: #47525c; }
  .thumb b { width: 11px; line-height: 12px; }
  .mini { width: 177px; height: 249px; background: #fff; border: 1px solid #777; box-shadow: 1px 1px 2px #5a7488; }
  .mini .diagram g { stroke-width: 2.800; }
  .mini .diagram .labels { stroke: none; }
  .diagram { width: 100%; height: 100%; }
  .split { width: 7px; display: grid; place-items: center; background: #f4f4f4; border-right: 2px solid #777; border-bottom: 1px solid #999; }
  .split i { width: 2px; height: 34px; background: repeating-linear-gradient(#777 0 2px, transparent 2px 4px); }
  .right { border-right: 1px solid #999; }

  .work { width: 1134px; display: grid; grid-template-columns: 28px 1089px 17px; grid-template-rows: 28px 801px 18px; border-top: 1px solid #666; }
  .corner { padding: 4px 0 0 4px; }
  .corner svg { width: 18px; height: 18px; }
  .hruler { width: 1089px; height: 28px; }
  .vruler { width: 28px; height: 801px; grid-row: 2; grid-column: 1; }
  .hruler text, .vruler text, .tabs text { font-size: 11.4px; }
  .hruler text, .vruler text { letter-spacing: -0.2px; }
  .canvas { background: #fff; overflow: hidden; grid-row: 2; grid-column: 2; padding: 3px 0 0 155px; }
  .page { width: 565px; height: 798px; background: #fff; border: 1px solid #888; box-shadow: 2px 2px 4px #999, -1px 0 3px #bbb; padding: 26px 0 0 26px; }
  .page::before { content: ''; box-sizing: border-box; display: block; width: 511px; height: 745px; border: 1px solid #c4c4c4; }
  .page .diagram { width: 563px; height: 797px; margin: -772px 0 0 -26px; }
  .vscroll { grid-row: 1 / 3; grid-column: 3; display: flex; flex-direction: column; align-items: center; padding: 7px 2px 6px 0; }
  .vscroll svg { width: 8px; height: 5px; }
  .vscroll i { width: 15px; height: 398px; margin: 203px 0 auto; background: #cdcdcd; }
  .bottom { grid-column: 1 / 4; display: flex; border-bottom: 1px solid #ddd; }
  .navs { width: 68px; display: flex; gap: 2px; padding: 1px 0 0 2px; }
  .navs svg { width: 15px; height: 15px; border: 1px solid #999; background: #f0f0f0; }
  .navs .dis { background: #ccc; border-color: #bbb; }
  .tabs { width: 284px; height: 17px; }
  .hscroll { flex: 1; display: flex; align-items: center; padding: 0 23px 0 4px; }
  .hscroll svg { width: 5px; height: 8px; }
  .hscroll i { width: 471px; height: 15px; background: #cdcdcd; margin: 0 auto 0 182px; }

  .props { flex: 1; display: flex; border-right: 1px solid #999; border-bottom: 1px solid #999; padding: 4px 0 3px 3px; }
  .deck { width: 258px; border: 1px solid #ddd; }
  .dhead { height: 26px; display: flex; justify-content: space-between; padding: 6px 5px 0 9px; }
  .dhead svg { margin-top: 1px; }
  .dsub { height: 26px; display: flex; align-items: center; gap: 5px; padding: 3px 0 0 5px; background: linear-gradient(#dedede, #f0f0f0); color: #222; }
  .dsub svg { width: 9px; height: 9px; margin-top: -2px; }
  .dsub b { font-size: 11.6px; }
  .set { width: 220px; height: 31px; margin: 8px 0 0 5px; display: flex; align-items: center; border: 1px solid #e2e2e2; background: linear-gradient(#f3f3f3, #fff); }
  .set .tool { padding-left: 5px; height: 23px; margin-top: -1px; }
  .set .tool.menued { padding-left: 4px; }
  .set .drop { margin-top: -3px; padding-left: 2px; }
  .second .tool.menued { padding-left: 3px; }
  .first { width: 237px; margin-top: 1px; }
  .dtabs { flex: 1; display: flex; flex-direction: column; align-items: center; padding-top: 6px; gap: 3px; }
  .burger { width: 18px; height: 18px; margin-bottom: 12px; }
  .dtab { width: 32px; height: 32px; display: grid; place-items: center; }
  .dtab svg { width: 24px; height: 24px; }
  .sel { border: 1px solid #999; border-radius: 3px; }

  .status { height: 22px; border-top: 2px solid #bbb; background: #f0f0f0; display: flex; align-items: center; padding-left: 646px; }
  .status > div { height: 16px; border-left: 1px solid #999; display: flex; align-items: center; padding-left: 5px; flex: none; }
  .status .pos { width: 108px; gap: 6px; padding-left: 7px; }
  .status .size { width: 113px; gap: 5px; border: 0; padding-left: 6px; }
  .pos svg { width: 14px; height: 12px; }
  .size svg { width: 15px; height: 12px; }
  .gap1 { width: 16px; }
  .gap2 { width: 29px; }
  .slide { width: 73px; }
  .style { width: 512px; }
  .zoom { width: 143px; }
  .status .zoom { padding-left: 3px; }
  .status .pct { padding-left: 4px; }
  .zoom svg { width: 134px; height: 14px; }

  .taskbar { height: 40px; background: #101010; display: flex; color: #fff; padding-right: 4px; }
  .task { width: 49px; height: 40px; display: grid; place-items: center; flex: none; }
  .task svg { width: 28px; height: 28px; }
  .task:nth-child(-n + 3) { width: 48px; }
  .task:nth-child(4) { margin-left: 2px; }
  .run { background: linear-gradient(#5a87c0, #5a87c0) center bottom / 40px 2px no-repeat; }
  .alert { background: #99521b; border-bottom: 2px solid #ff6e00; }
  .active { background: #333; border-bottom: 2px solid #5a87c0; margin-left: 1px; }
  .tray { margin-left: auto; display: flex; align-items: center; }
  .trayicons { width: 66px; height: 16px; margin-right: 3px; }
  .stack { display: flex; flex-direction: column; align-items: center; line-height: 17px; padding-bottom: 1px; }
  .lang { width: 30px; }
  .clock { width: 72px; }
  .note { width: 26px; height: 26px; margin: 0 10px 0 10px; }
  .peek { width: 1px; height: 40px; background: #555; }
</style>
